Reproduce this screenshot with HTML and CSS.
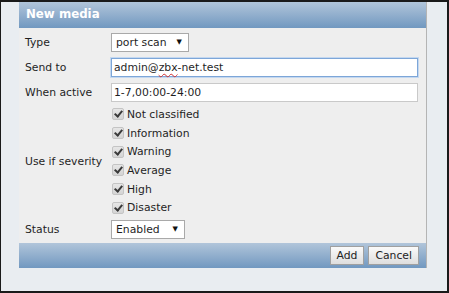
FILE: index.html
```html
<!DOCTYPE html>
<html>
  <head>
    <title>New media</title>
    <link rel="stylesheet" href="styles.css">
  </head>
  <body>
    <div class="screen">
      <div class="dialog">
        <div class="dialog-title">New media</div>

        <div class="form-grid">
          <div class="label">Type</div>
          <div class="field">
            <div class="select select-type">port scan<span class="arrow">&#9660;</span></div>
          </div>

          <div class="label">Send to</div>
          <div class="field">
            <div class="text-input focused">admin@<span class="typo">zbx</span>-net.test</div>
          </div>

          <div class="label">When active</div>
          <div class="field">
            <div class="text-input">1-7,00:00-24:00</div>
          </div>

          <div class="label">Use if severity</div>
          <div class="field severity-list">
            <div class="check-row"><span class="checkbox"></span>Not classified</div>
            <div class="check-row"><span class="checkbox"></span>Information</div>
            <div class="check-row"><span class="checkbox"></span>Warning</div>
            <div class="check-row"><span class="checkbox"></span>Average</div>
            <div class="check-row"><span class="checkbox"></span>High</div>
            <div class="check-row"><span class="checkbox"></span>Disaster</div>
          </div>

          <div class="label">Status</div>
          <div class="field">
            <div class="select select-status">Enabled<span class="arrow">&#9660;</span></div>
          </div>
        </div>

        <div class="dialog-footer">
          <button class="btn">Add</button>
          <button class="btn">Cancel</button>
        </div>
      </div>
    </div>
  </body>
</html>
```

FILE: styles.css
```css
body{
  margin: 0;
  font-family: "DejaVu Sans", Verdana, sans-serif;
  font-size: 10.8px;
  color: #1f1f1f;
}
.screen{
  box-sizing: border-box;
  width: 449px;
  height: 293px;
  background-color: #e9edf1;
  border-style: solid;
  border-color: #1a1a1a;
  border-width: 2px 2px 2px 1px;
  padding-left: 18px;
}
.dialog{
  width: 408px;
  background-color: #eeeeee;
  border-right: 1px solid #b4b4b4;
  box-sizing: border-box;
}
.dialog-title{
  height: 26px;
  line-height: 25px;
  padding-left: 7px;
  color: #ffffff;
  font-weight: bold;
  font-size: 11.8px;
  background: linear-gradient(#b1c5da, #7198c0);
}
.form-grid{
  display: grid;
  grid-template-columns: 86px 1fr;
  padding: 2px 8px 1px 6px;
  align-items: center;
}
.label{
  height: 25px;
  line-height: 25px;
}
.field{
  display: flex;
  align-items: center;
  min-height: 25px;
}
.select{
  position: relative;
  box-sizing: border-box;
  height: 19px;
  line-height: 17px;
  padding-left: 4px;
  background-color: #ffffff;
  border: 1px solid #a9a9a9;
}
.select-type{
  width: 78px;
}
.select-status{
  width: 74px;
}
.arrow{
  position: absolute;
  right: 6px;
  top: 0;
  font-size: 7px;
  color: #111;
}
.text-input{
  box-sizing: border-box;
  width: 100%;
  height: 19px;
  line-height: 17px;
  padding-left: 2px;
  background-color: #ffffff;
  border: 1px solid #c9c9c9;
}
.text-input.focused{
  border-color: #7da6d8;
  box-shadow: 0 0 0 1px #c4d8f0;
}
.typo{
  text-decoration: underline wavy #d03030;
  text-decoration-thickness: 1px;
  text-underline-offset: 2px;
}
.severity-list{
  flex-direction: column;
  align-items: flex-start;
}
.check-row{
  display: flex;
  align-items: center;
  height: 18.7px;
}
.checkbox{
  position: relative;
  box-sizing: border-box;
  width: 12px;
  height: 12px;
  margin-left: 1px;
  margin-right: 3px;
  border: 1px solid #c4c4c4;
  border-radius: 2px;
  background: linear-gradient(#e6e6e6, #d4d4d4);
}
.checkbox::after{
  content: "";
  position: absolute;
  left: 3px;
  top: 0px;
  width: 3px;
  height: 6px;
  border-right: 2px solid #3a3a3a;
  border-bottom: 2px solid #3a3a3a;
  transform: rotate(40deg);
}
.dialog-footer{
  display: flex;
  justify-content: flex-end;
  align-items: center;
  gap: 4px;
  height: 25px;
  padding-right: 7px;
  background: linear-gradient(#b1c5da, #7198c0);
}
.btn{
  height: 19px;
  padding: 0 6px;
  font-family: "DejaVu Sans", Verdana, sans-serif;
  font-size: 10.8px;
  color: #222;
  border: 1px solid #a0a0a0;
  border-radius: 0;
  background: linear-gradient(#fafafa, #dedede);
}
```
